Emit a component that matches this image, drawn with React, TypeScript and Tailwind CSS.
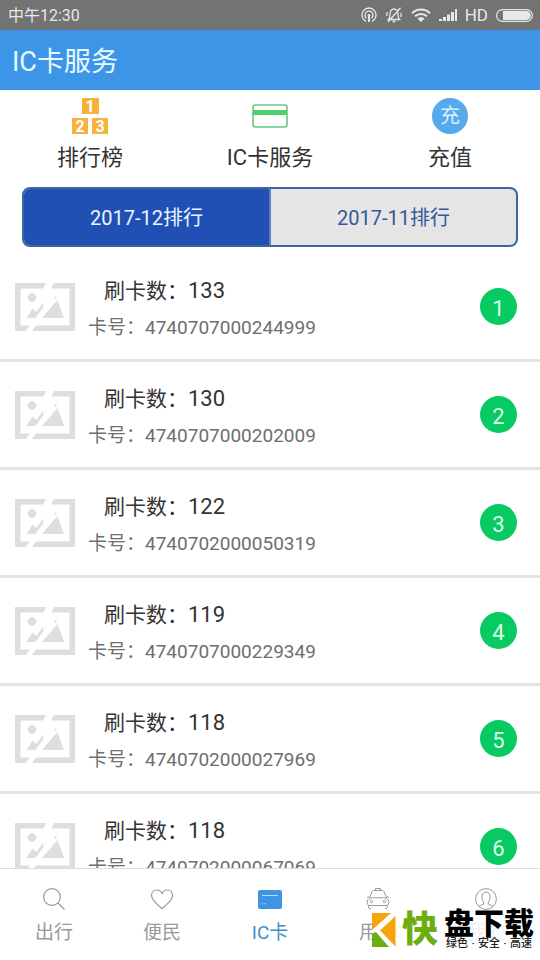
import type { ReactNode } from 'react'

const RECORDS = [
  { count: 133, card: '4740707000244999' },
  { count: 130, card: '4740707000202009' },
  { count: 122, card: '4740702000050319' },
  { count: 119, card: '4740707000229349' },
  { count: 118, card: '4740702000027969' },
  { count: 118, card: '4740702000067069' },
]

const SHORTCUTS = [
  { label: '排行榜', icon: <RankIcon /> },
  { label: 'IC卡服务', icon: <CardIcon /> },
  { label: '充值', icon: <RechargeIcon /> },
]

const NAV = [
  { label: '出行', icon: <SearchIcon />, active: false },
  { label: '便民', icon: <HeartIcon />, active: false },
  { label: 'IC卡', icon: <CardSolidIcon />, active: true },
  { label: '用车', icon: <TaxiIcon />, active: false },
  { label: '我的', icon: <UserIcon />, active: false },
]

function RankIcon() {
  return (
    <svg width="36" height="36" viewBox="0 0 36 36" aria-hidden="true">
      <g fill="#f5b23c">
        <rect x="10" y="0" width="17" height="16" />
        <rect x="0" y="20" width="16" height="16" />
        <rect x="20" y="20" width="16" height="16" />
      </g>
      <g
        fill="#fff"
        fontFamily="Roboto, sans-serif"
        fontWeight="700"
        fontSize="16"
        textAnchor="middle"
      >
        <text x="18" y="14">1</text>
        <text x="8" y="34">2</text>
        <text x="28" y="34">3</text>
      </g>
    </svg>
  )
}

function CardIcon() {
  return (
    <svg width="36" height="36" viewBox="0 0 36 36" fill="none" aria-hidden="true">
      <rect x="1" y="7" width="34" height="22" rx="2.5" stroke="#6cc583" strokeWidth="1.6" />
      <rect x="1" y="12" width="34" height="5" fill="#4fd06c" />
    </svg>
  )
}

function RechargeIcon() {
  return (
    <span className="flex size-9 items-center justify-center rounded-full bg-[#54aaea] text-xl leading-none text-[#d8f2ff]">
      充
    </span>
  )
}

function SearchIcon() {
  return (
    <svg width="24" height="24" viewBox="0 0 24 24" fill="none" stroke="#999" strokeWidth="1.2" aria-hidden="true">
      <circle cx="10" cy="10" r="8.4" />
      <path d="M16 16l6.5 6.5" />
    </svg>
  )
}

function HeartIcon() {
  return (
    <svg width="24" height="24" viewBox="0 0 24 24" fill="none" stroke="#999" strokeWidth="1.2" aria-hidden="true">
      <path d="M12 21.5C9 19 1.5 13.5 1.5 8.2 1.5 5 4 3 6.7 3c2.300 0 4.300 1.400 5.300 3.500C13 4.400 15 3 17.300 3 20 3 22.500 5 22.500 8.200 22.500 13.500 15 19 12 21.500z" />
    </svg>
  )
}

function CardSolidIcon() {
  return (
    <svg width="24" height="24" viewBox="0 0 24 24" aria-hidden="true">
      <rect x="0" y="3" width="24" height="19" rx="2" fill="#3f95e4" />
      <path d="M4 8.500h16M4 16.800h1.200M6 16.800h1.500" stroke="#b9dcf8" strokeWidth="1" />
    </svg>
  )
}

function TaxiIcon() {
  return (
    <svg width="24" height="24" viewBox="0 0 24 24" fill="none" stroke="#999" strokeWidth="1" aria-hidden="true">
      <path d="M9.500 3.500V1.500h5v2M3.500 11L6 4.500c.3-.7.8-1 1.500-1h9c.7 0 1.200.3 1.500 1l2.500 6.500" />
      <path d="M3.500 11.500c1-.6 2-.8 3-.8h11c1 0 2 .2 3 .8 1.500.8 2.300 2 2.300 3.500 0 1.800-.6 3-1.800 3.500H3c-1.200-.5-1.800-1.700-1.800-3.500 0-1.500.8-2.700 2.300-3.500zM1 10.500l2-1M23 10.500l-2-1" />
      <circle cx="5.500" cy="14.500" r="1.200" />
      <circle cx="18.500" cy="14.500" r="1.200" />
      <path d="M2.500 18.500v1.700c0 .8.500 1.300 1.200 1.300H5M21.500 18.500v1.700c0 .8-.5 1.300-1.200 1.300H19" />
    </svg>
  )
}

function UserIcon() {
  return (
    <svg width="24" height="24" viewBox="0 0 24 24" fill="none" stroke="#999" strokeWidth="1" aria-hidden="true">
      <circle cx="12" cy="12" r="10.4" />
      <path d="M5 19.500c1-1.500 4-1.600 4.800-2.500.7-1-1.800-3.200-1.800-7C8 7 9.500 5 12 5s4 2 4 5c0 3.800-2.500 6-1.800 7 .8.900 3.800 1 4.800 2.500" />
    </svg>
  )
}

function PicturePlaceholder() {
  return (
    <svg width="60" height="48" viewBox="0 0 60 48" aria-hidden="true" className="shrink-0">
      <path d="M0 0h60v48H0z" fill="#dedede" />
      <path d="M5.500 5.500h49v37h-49z" fill="#fff" />
      <g fill="#dedede">
        <circle cx="17" cy="14.500" r="4.400" />
        <circle cx="40.500" cy="14.500" r="1.200" />
        <path d="M11.500 35l6-9.500 4 3.500 6.500-9.500.5 4.500L20.500 35z" />
        <path d="M27 35l15.500-18L49 35z" />
      </g>
      <path d="M31 0h8l-3 6h-8zM16 41h6l-5 7h-6z" fill="#fff" />
    </svg>
  )
}

function StatusBar() {
  return (
    <div className="flex h-[30px] shrink-0 items-center justify-between bg-[#737373] pl-2 pr-[7px] text-[#e8e8e8]">
      <span className="pt-0.5 text-base leading-none">中午12:30</span>
      <div className="flex items-center gap-2">
        <svg width="16" height="16" viewBox="0 0 16 16" fill="none" stroke="currentColor" strokeWidth="1.3" aria-hidden="true">
          <path d="M5 14.300a7 7 0 1 1 6 0M5.500 11.200a4 4 0 1 1 5 0" />
          <circle cx="8" cy="8.3" r="1.4" fill="currentColor" stroke="none" />
          <path d="M8 9v6" strokeWidth="2" />
        </svg>
        <svg width="18" height="16" viewBox="0 0 18 16" fill="none" stroke="currentColor" strokeWidth="1.3" aria-hidden="true">
          <path d="M3.500 12.500h11c-1.300-1.200-1.500-2.500-1.500-5C13 4 11.500 2 9 2S5 4 5 7.500c0 2.500-.2 3.800-1.500 5zM7.500 14.500h3M15.500.8L3 15M2 5v4M16 6v4" />
        </svg>
        <svg width="20" height="16" viewBox="0 0 20 16" fill="none" stroke="currentColor" strokeWidth="2" aria-hidden="true">
          <path d="M1 6.200C6 1.300 14 1.300 19 6.200M4 9.300c3.500-3.200 8.500-3.200 12 0" />
          <path d="M6.500 11.500c2-1.700 5-1.700 7 0L10 15z" fill="currentColor" stroke="none" />
        </svg>
        <svg width="18" height="16" viewBox="0 0 18 16" fill="currentColor" aria-hidden="true">
          <path d="M0 12h3v2H0zM4 10h3v4H4zM8 7.500h3V14H8zM12 5h3v9h-3zM16 2h2v12h-2z" />
        </svg>
        <span className="text-[17px] leading-none">HD</span>
        <svg width="37" height="13" viewBox="0 0 37 13" aria-hidden="true">
          <rect x=".6" y=".6" width="35.8" height="11.8" rx="5.9" fill="none" stroke="currentColor" strokeWidth="1.2" />
          <path d="M7 2h23c3 0 4.800 2 4.800 4.500S33 11 30 11H7z" fill="currentColor" />
        </svg>
      </div>
    </div>
  )
}

function Shortcut({ label, icon }: { label: string; icon: ReactNode }) {
  return (
    <button type="button" className="flex flex-1 flex-col items-center gap-2">
      {icon}
      <span className="text-[22px] leading-8 text-[#333]">{label}</span>
    </button>
  )
}

function Watermark() {
  return (
    <div className="absolute bottom-2.5 right-1.5 flex items-center gap-1.5">
      <svg width="24" height="34" viewBox="0 0 24 34" aria-hidden="true">
        <rect width="24" height="34" fill="#fff" />
        <path d="M0 0h19L0 17z" fill="#f9a30b" />
        <path d="M23.500 3v30.500L8 17.500z" fill="#f9a30b" />
        <path d="M0 20.500l4-1.500L17 34H0z" fill="#6cae10" />
      </svg>
      <span className="text-[36px] font-black leading-9 text-[#6cae10]">快</span>
      <div className="flex flex-col items-center bg-white/85">
        <span className="text-[30px] font-black leading-7 text-black">盘下载</span>
        <span className="flex text-[11px] font-medium leading-3 text-[#222]">
          <span>绿色</span>
          <span className="w-2.5 text-center">·</span>
          <span>安全</span>
          <span className="w-2.5 text-center">·</span>
          <span>高速</span>
        </span>
      </div>
    </div>
  )
}

export default function App() {
  return (
    <div className="flex h-screen flex-col overflow-hidden bg-white font-[Roboto,'Noto_Sans_CJK_SC',sans-serif]">
      <StatusBar />

      <header className="flex h-[60px] shrink-0 items-center bg-[#3d95e7] px-3 pt-1">
        <h1 className="text-[27px] leading-none text-[#e6fbff]">IC卡服务</h1>
      </header>

      <div className="flex shrink-0 pt-2">
        {SHORTCUTS.map((s) => (
          <Shortcut key={s.label} label={s.label} icon={s.icon} />
        ))}
      </div>

      {/* Month switch */}
      <div className="mx-[22px] mt-[13px] flex h-[60px] shrink-0 overflow-hidden rounded-lg border-2 border-[#3f669c] bg-[#e5e5e5] text-xl">
        <button type="button" className="flex-1 bg-[#2150b4] pt-0.5 text-[#e9f6ff]">
          2017-12排行
        </button>
        <button type="button" className="flex-1 border-l-2 border-[#5f7fc0] pt-0.5 text-[#33589c]">
          2017-11排行
        </button>
      </div>

      {/* Ranking */}
      <ol className="mt-[7px] min-h-0 flex-1 overflow-hidden">
        {RECORDS.map((r, i) => (
          <li
            key={r.card}
            className="flex h-[108px] items-center border-b-3 border-[#e4e4e4] pl-[15px] pr-[23px]"
          >
            <PicturePlaceholder />
            <div className="ml-[13px] flex-1 pt-1.5">
              <p className="pl-4 text-[21px] leading-9 text-[#333]">
                刷卡数：<span className="text-[22px]">{r.count}</span>
              </p>
              <p className="text-[19px] leading-[38px] text-[#6e6e6e]">卡号：{r.card}</p>
            </div>
            <span className="flex size-[37px] items-center justify-center rounded-full bg-[#07cb62] pt-1 text-[22px] leading-none text-[#d9ffe9]">
              {i + 1}
            </span>
          </li>
        ))}
      </ol>

      <div className="relative shrink-0">
        <nav className="flex h-[92px] border-t border-[#dcdcdc] bg-white pt-[18px]">
          {NAV.map((n) => (
            <a
              key={n.label}
              href="#"
              className={`flex flex-1 flex-col items-center gap-1.5 text-[19px] leading-8 ${
                n.active ? 'text-[#3f8fc9]' : 'text-[#999]'
              }`}
            >
              {n.icon}
              {n.label}
            </a>
          ))}
        </nav>
        <Watermark />
      </div>
    </div>
  )
}
